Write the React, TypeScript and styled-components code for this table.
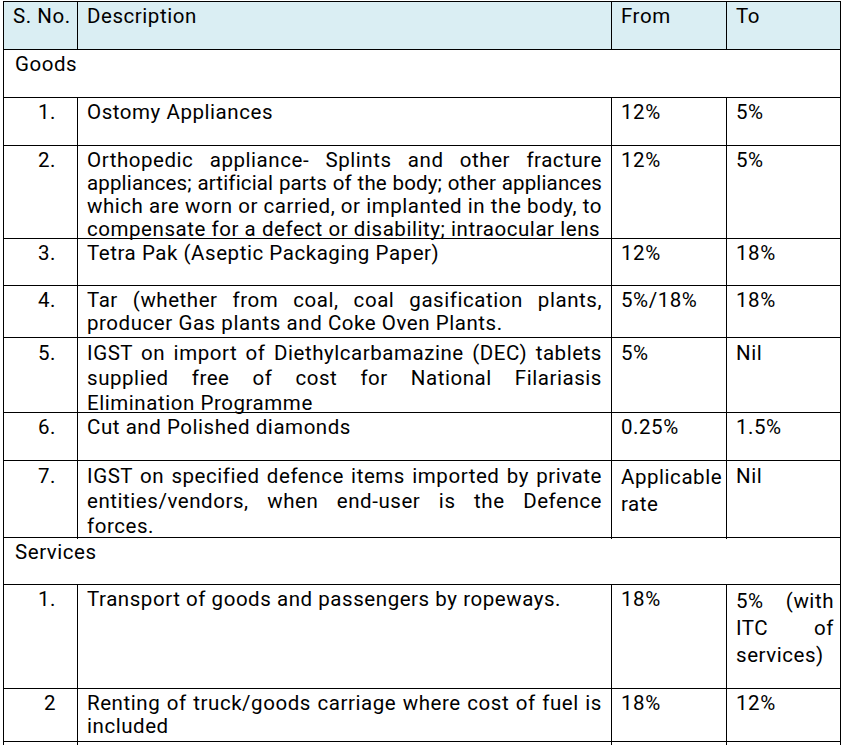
import React from "react";
import styled, { createGlobalStyle } from "styled-components";

const GlobalStyle = createGlobalStyle`
  html, body { margin: 0; padding: 0; background: #ffffff; overflow: hidden; }
  * { box-sizing: border-box; }
`;

const Table = styled.div`
  margin: 1px 0 0 3px;
  width: 838px;
  border-left: 1px solid #000;
  border-top: 1px solid #000;
  font-family: Roboto, "Liberation Sans", Arial, sans-serif;
  font-size: 20.5px;
  letter-spacing: 0.55px;
  color: #000;
`;

const Row = styled.div<{ $h: number; $head?: boolean }>`
  display: grid;
  grid-template-columns: 74px 534px 115px 114px;
  height: ${(p) => p.$h}px;
  border-bottom: 1px solid #000;
  background: ${(p) => (p.$head ? "#daeef3" : "#ffffff")};
`;

const Cell = styled.div<{ $lh?: number; $pr?: number }>`
  border-right: 1px solid #000;
  padding: 3px ${(p) => p.$pr ?? 9}px 0 9px;
  line-height: ${(p) => p.$lh ?? 23}px;
  text-align: left;
  white-space: nowrap;
  min-width: 0;
`;

const NumCell = styled(Cell)`
  text-align: right;
  padding-right: 21px;
`;

const SectionCell = styled(Cell)`
  grid-column: 1 / -1;
  padding-left: 11px;
`;

const Line = styled.div<{ $justify?: boolean; $tight?: boolean }>`
  white-space: nowrap;
  text-align: ${(p) => (p.$justify ? "justify" : "left")};
  text-align-last: ${(p) => (p.$justify ? "justify" : "left")};
  word-spacing: ${(p) => (p.$justify && !p.$tight ? "-3px" : "0")};
  letter-spacing: ${(p) => (p.$tight ? "0.15px" : "inherit")};
`;

type TextLine = string | { text: string; tight: boolean };

type Item = {
  no: string;
  desc: TextLine[];
  from: string[];
  to: TextLine[];
  h: number;
  lh?: number;
  fromLh?: number;
  toLh?: number;
  toPr?: number;
};

const goods: Item[] = [
  { no: "1.", desc: ["Ostomy Appliances"], from: ["12%"], to: ["5%"], h: 48 },
  {
    no: "2.",
    desc: [
      "Orthopedic appliance- Splints and other fracture",
      { text: "appliances; artificial parts of the body; other appliances", tight: true },
      "which are worn or carried, or implanted in the body, to",
      "compensate for a defect or disability; intraocular lens",
    ],
    from: ["12%"],
    to: ["5%"],
    h: 93,
  },
  { no: "3.", desc: ["Tetra Pak (Aseptic Packaging Paper)"], from: ["12%"], to: ["18%"], h: 47 },
  {
    no: "4.",
    desc: ["Tar (whether from coal, coal gasification plants,", "producer Gas plants and Coke Oven Plants."],
    from: ["5%/18%"],
    to: ["18%"],
    h: 52,
  },
  {
    no: "5.",
    desc: [
      "IGST on import of Diethylcarbamazine (DEC) tablets",
      "supplied free of cost for National Filariasis",
      "Elimination Programme",
    ],
    from: ["5%"],
    to: ["Nil"],
    h: 75,
    lh: 25,
  },
  { no: "6.", desc: ["Cut and Polished diamonds"], from: ["0.25%"], to: ["1.5%"], h: 48 },
  {
    no: "7.",
    desc: [
      "IGST on specified defence items imported by private",
      "entities/vendors, when end-user is the Defence",
      "forces.",
    ],
    from: ["Applicable", "rate"],
    to: ["Nil"],
    h: 77,
    lh: 25,
    fromLh: 27,
  },
];

const services: Item[] = [
  {
    no: "1.",
    desc: ["Transport of goods and passengers by ropeways."],
    from: ["18%"],
    to: ["5% (with", "ITC of", "services)"],
    h: 104,
    toLh: 27,
    toPr: 6,
  },
  {
    no: "2",
    desc: ["Renting of truck/goods carriage where cost of fuel is", "included"],
    from: ["18%"],
    to: ["12%"],
    h: 53,
  },
];

const Lines = ({ lines }: { lines: TextLine[] }) => (
  <>
    {lines.map((l, i) => {
      const text = typeof l === "string" ? l : l.text;
      const tight = typeof l === "string" ? false : l.tight;
      return (
        <Line key={i} $justify={i < lines.length - 1} $tight={tight}>
          {text}
        </Line>
      );
    })}
  </>
);

const ItemRow = ({ item }: { item: Item }) => (
  <Row $h={item.h}>
    <NumCell $lh={item.lh}>{item.no}</NumCell>
    <Cell $lh={item.lh}>
      <Lines lines={item.desc} />
    </Cell>
    <Cell $lh={item.fromLh ?? item.lh} $pr={2}>
      {item.from.map((l, i) => (
        <Line key={i}>{l}</Line>
      ))}
    </Cell>
    <Cell $lh={item.toLh ?? item.lh} $pr={item.toPr}>
      <Lines lines={item.to} />
    </Cell>
  </Row>
);

export default function App() {
  return (
    <>
      <GlobalStyle />
      <Table>
        <Row $h={48} $head>
          <Cell>S. No.</Cell>
          <Cell>Description</Cell>
          <Cell>From</Cell>
          <Cell>To</Cell>
        </Row>
        <Row $h={48}>
          <SectionCell>Goods</SectionCell>
        </Row>
        {goods.map((g) => (
          <ItemRow key={"g" + g.no} item={g} />
        ))}
        <Row $h={47}>
          <SectionCell>Services</SectionCell>
        </Row>
        {services.map((s) => (
          <ItemRow key={"s" + s.no} item={s} />
        ))}
        <Row $h={30}>
          <Cell />
          <Cell />
          <Cell />
          <Cell />
        </Row>
      </Table>
    </>
  );
}
